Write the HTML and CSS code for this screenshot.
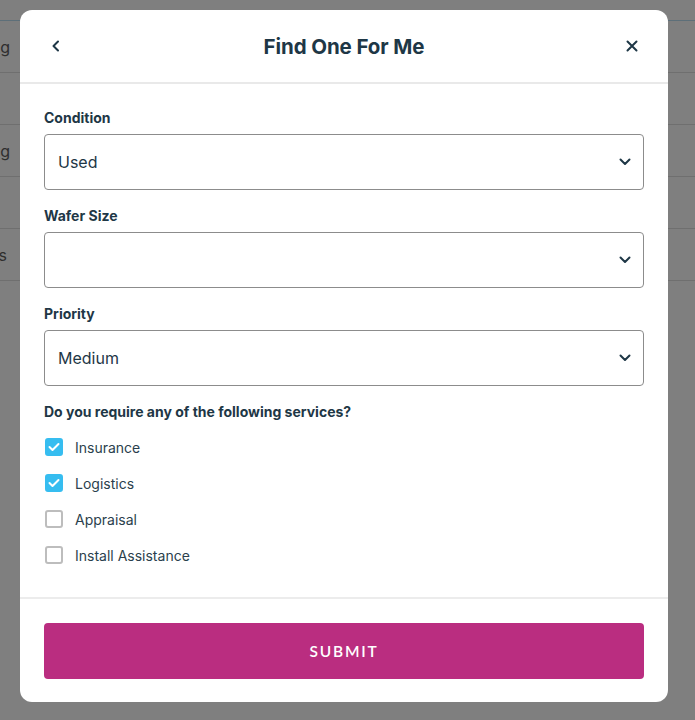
FILE: index.html
```html
<!DOCTYPE html>
<html lang="en">
<head>
<meta charset="utf-8">
<title>Find One For Me</title>
<link rel="stylesheet" href="styles.css">
</head>
<body>
<div class="backdrop">
  <div class="bg-list">
    <div class="bg-row"><span class="bg-text">Pricing</span></div>
    <div class="bg-row"><span class="bg-text"></span></div>
    <div class="bg-row"><span class="bg-text">Shipping</span></div>
    <div class="bg-row"><span class="bg-text"></span></div>
    <div class="bg-row"><span class="bg-text bg-text-short">Parts</span></div>
  </div>
</div>

<div class="modal">
  <div class="modal-header">
    <button class="icon-btn" aria-label="Back">
      <svg width="14" height="14" viewBox="0 0 14 14"><path d="M9 2.5 L4.5 7 L9 11.5" fill="none" stroke="#1e3746" stroke-width="2" stroke-linecap="round" stroke-linejoin="round"/></svg>
    </button>
    <h1 class="modal-title">Find One For Me</h1>
    <button class="icon-btn" aria-label="Close">
      <svg width="14" height="14" viewBox="0 0 14 14"><path d="M2.5 2.5 L11.5 11.5 M11.5 2.5 L2.5 11.5" fill="none" stroke="#1e3746" stroke-width="2" stroke-linecap="round"/></svg>
    </button>
  </div>

  <div class="modal-body">
    <div class="field">
      <div class="label">Condition</div>
      <div class="select"><span>Used</span>
        <svg width="12" height="8" viewBox="0 0 12 8"><path d="M1.5 1.5 L6 6 L10.5 1.5" fill="none" stroke="#1e3746" stroke-width="2" stroke-linecap="round" stroke-linejoin="round"/></svg>
      </div>
    </div>
    <div class="field">
      <div class="label">Wafer Size</div>
      <div class="select"><span></span>
        <svg width="12" height="8" viewBox="0 0 12 8"><path d="M1.5 1.5 L6 6 L10.5 1.5" fill="none" stroke="#1e3746" stroke-width="2" stroke-linecap="round" stroke-linejoin="round"/></svg>
      </div>
    </div>
    <div class="field">
      <div class="label">Priority</div>
      <div class="select"><span>Medium</span>
        <svg width="12" height="8" viewBox="0 0 12 8"><path d="M1.5 1.5 L6 6 L10.5 1.5" fill="none" stroke="#1e3746" stroke-width="2" stroke-linecap="round" stroke-linejoin="round"/></svg>
      </div>
    </div>
    <div class="field">
      <div class="label">Do you require any of the following services?</div>
      <div class="checks">
        <div class="check-row"><span class="box checked"><svg width="12" height="10" viewBox="0 0 12 10"><path d="M1.5 5 L4.5 8 L10.5 2" fill="none" stroke="#fff" stroke-width="2" stroke-linecap="round" stroke-linejoin="round"/></svg></span><span class="check-label">Insurance</span></div>
        <div class="check-row"><span class="box checked"><svg width="12" height="10" viewBox="0 0 12 10"><path d="M1.5 5 L4.5 8 L10.5 2" fill="none" stroke="#fff" stroke-width="2" stroke-linecap="round" stroke-linejoin="round"/></svg></span><span class="check-label">Logistics</span></div>
        <div class="check-row"><span class="box"></span><span class="check-label">Appraisal</span></div>
        <div class="check-row"><span class="box"></span><span class="check-label">Install Assistance</span></div>
      </div>
    </div>
  </div>

  <div class="modal-footer">
    <button class="submit">SUBMIT</button>
  </div>
</div>
</body>
</html>
```

FILE: styles.css
```css
* { box-sizing: border-box; }
html, body { margin: 0; padding: 0; }
body {
  width: 695px;
  height: 720px;
  overflow: hidden;
  background: #7f7f7f;
  font-family: Inter, "Noto Sans", sans-serif;
  position: relative;
}
.backdrop { padding-top: 20px; }
.bg-list { border-top: 1px solid #5d6f79; }
.bg-row {
  height: 52px;
  border-bottom: 1px solid #6f6f6f;
  display: flex;
  align-items: center;
}
.bg-text {
  display: flex;
  justify-content: flex-end;
  width: 10px;
  white-space: nowrap;
  font-size: 16px;
  color: #2e2e2e;
}
.bg-text-short { width: 7px; }

.modal {
  position: absolute;
  left: 20px;
  top: 10px;
  width: 648px;
  height: 692px;
  background: #fff;
  border-radius: 12px;
  display: flex;
  flex-direction: column;
}
.modal-header {
  flex-shrink: 0;
  height: 74px;
  border-bottom: 2px solid #e9e9e9;
  display: flex;
  align-items: center;
  justify-content: space-between;
  padding: 0 25px 0 25px;
}
.icon-btn {
  width: 22px;
  height: 22px;
  border: 0;
  background: none;
  padding: 0;
  display: flex;
  align-items: center;
  justify-content: center;
}
.modal-title {
  margin: 0;
  font-size: 20.5px;
  font-weight: 700;
  color: #1e3746;
  letter-spacing: -0.1px;
}
.modal-body {
  flex-shrink: 0;
  padding: 24px;
  border-bottom: 2px solid #ececec;
  display: flex;
  flex-direction: column;
  gap: 16px;
}
.label {
  font-size: 14px;
  font-weight: 700;
  line-height: 20px;
  color: #1e3746;
}
.select {
  margin-top: 6px;
  height: 56px;
  border: 1px solid #8c8c8c;
  border-radius: 4px;
  display: flex;
  align-items: center;
  justify-content: space-between;
  padding: 0 12px 0 13px;
  font-size: 16px;
  color: #1e3746;
}
.checks { margin-top: 7px; display: flex; flex-direction: column; }
.check-row {
  height: 36px;
  display: flex;
  align-items: center;
  gap: 12px;
  padding-left: 1px;
}
.box {
  width: 18px;
  height: 18px;
  border: 2px solid #bdbdbd;
  border-radius: 3px;
  display: flex;
  align-items: center;
  justify-content: center;
}
.box.checked { background: #36bdf0; border-color: #36bdf0; }
.check-label { font-size: 14px; color: #2b3f4d; }

.modal-footer { flex-shrink: 0; padding: 24px 24px 23px; }
.submit {
  width: 100%;
  height: 56px;
  border: 0;
  border-radius: 4px;
  background: #ba2d80;
  color: #fff;
  font-family: Lato, "Noto Sans", sans-serif;
  font-size: 15.5px;
  font-weight: 600;
  letter-spacing: 1.8px;
}
```
